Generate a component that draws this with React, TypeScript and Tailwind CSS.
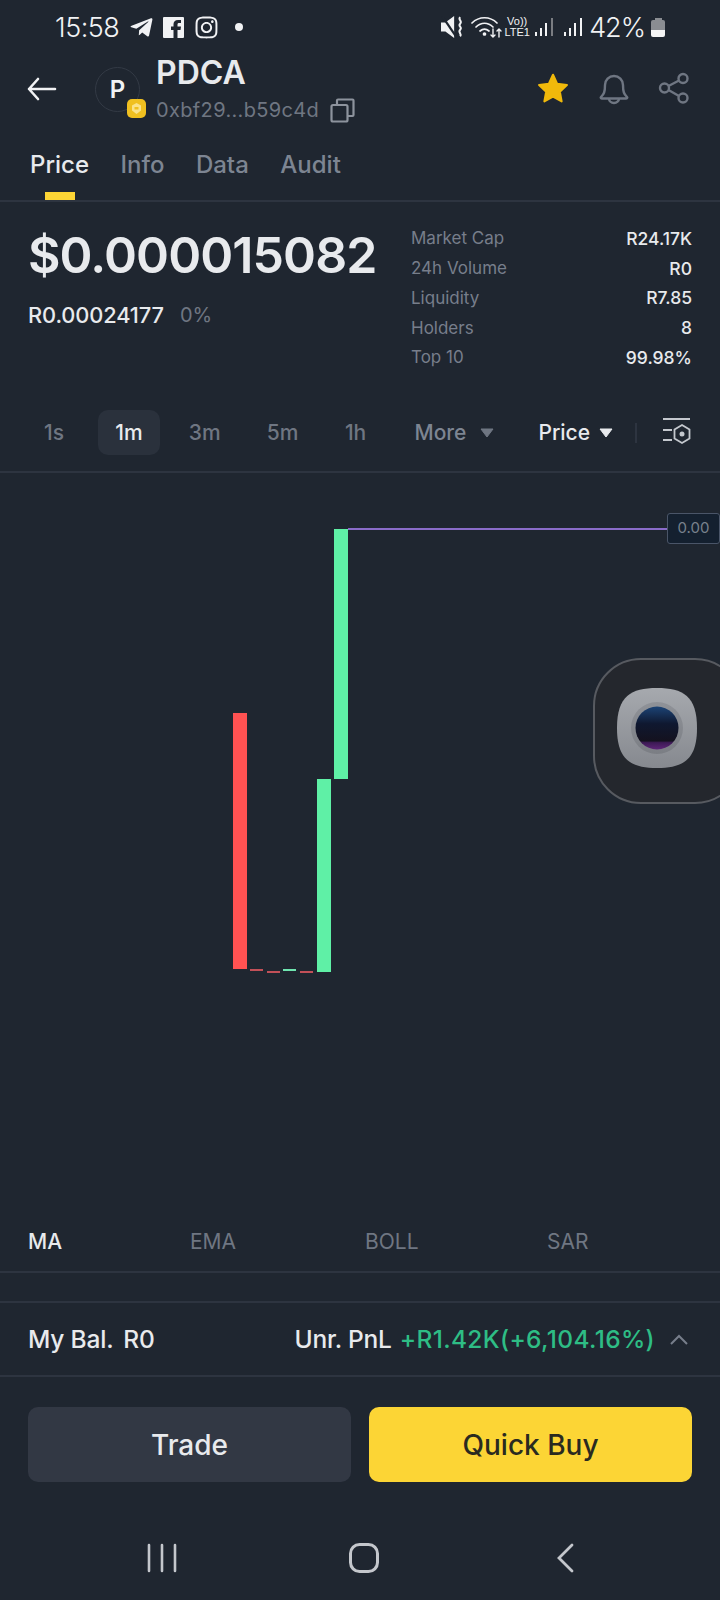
import React from "react";
import { FaTelegramPlane, FaInstagram } from "react-icons/fa";

const font = { fontFamily: "Inter, 'Liberation Sans', sans-serif" };

function StatusIcons() {
  return (
    <div className="flex items-center">
      {/* muted / vibrate */}
      <svg width="23" height="22" viewBox="0 0 21 20" fill="none">
        <path d="M0 6h4l8-6v20l-8-6H0z" fill="#f1f2f4" />
        <path d="M1 0l13 19" stroke="#1f2630" strokeWidth="2" />
        <path d="M17.500 1c-2.500 2.500 2.500 3.500 0 6s2.500 3 0 5.500 2 3.500 0 6" stroke="#f1f2f4" strokeWidth="1.800" />
      </svg>
      <svg width="32" height="24" viewBox="0 0 32 24" className="ml-[7px]" fill="none" stroke="#f1f2f4" strokeWidth="1.700" strokeLinecap="round">
        <path d="M1 8c7-7 18-7 25 0" />
        <path d="M5 12c5-5 12-5 17 0" />
        <path d="M9 16c3-2.500 6-2.500 9 0" />
        <circle cx="13.500" cy="19" r="1" fill="#f1f2f4" />
        <path d="M22 14v8m-2-2l2 2 2-2M28 22v-8m-2 2l2-2 2 2" strokeWidth="1.400" />
      </svg>
      <div className="flex flex-col items-center text-[#f1f2f4] text-[11px] leading-[11px] ml-[1px] font-medium w-[26px]" style={{ fontFamily: "'Liberation Sans', sans-serif" }}>
        <span>Vo))</span>
        <span>LTE1</span>
      </div>
      <Signal dim />
      <div className="w-[5px]" />
      <Signal />
      <span className="ml-[6px] text-[27px] leading-none font-light text-[#f1f2f4] tracking-[-1px]">42%</span>
      <div className="ml-[6px] flex flex-col items-center">
        <div className="w-[7px] h-[2px] bg-[#8a8d92]" />
        <div className="w-[14px] h-[17px] rounded-[2px] overflow-hidden flex flex-col">
          <div className="h-[10px] bg-[#8a8d92]" />
          <div className="h-[7px] bg-[#f4f4f4]" />
        </div>
      </div>
    </div>
  );
}

function Signal({ dim }: { dim?: boolean }) {
  return (
    <svg width="20" height="20" viewBox="0 0 20 20" className="ml-[4px]" fill="#f1f2f4">
      <rect x="1" y="15" width="2" height="4" />
      <rect x="6" y="11" width="2" height="8" />
      <rect x="11" y="6" width="2" height="13" />
      <rect x="17" y="1" width="2" height="18" fill={dim ? "#7a7d82" : "#f1f2f4"} />
    </svg>
  );
}

function Stat({ label, value }: { label: string; value: string }) {
  return (
    <div className="flex items-center justify-between h-[29.8px]">
      <span className="text-[17px] text-[#777e8b]">{label}</span>
      <span className="text-[17.500px] font-medium text-[#e8eaed]">{value}</span>
    </div>
  );
}

function Caret({ color }: { color: string }) {
  return (
    <svg width="14" height="10" viewBox="0 0 14 10">
      <path d="M1 1h12L7 9z" fill={color} stroke={color} strokeLinejoin="round" />
    </svg>
  );
}

export default function App() {
  return (
    <div className="relative w-[720px] h-[1600px] overflow-hidden bg-[#1f2630] flex flex-col" style={font}>
      {/* status bar */}
      <div className="h-[54px] flex items-center justify-between pl-[55px] pr-[55px] shrink-0">
        <div className="flex items-center">
          <span className="text-[27px] leading-none font-light text-[#f1f2f4] tracking-[-0.5px]">15:58</span>
          <FaTelegramPlane className="ml-[10px] text-[#f1f2f4]" size={25} />
          <svg width="21" height="21" viewBox="0 0 21 21" className="ml-[9px]">
            <path d="M0 1a1 1 0 0 1 1-1h19a1 1 0 0 1 1 1v19a1 1 0 0 1-1 1h-5.500v-8h3l.5-3.500h-3.500V7.500c0-1 .5-1.500 1.500-1.500h2V3h-3c-3 0-4.500 1.800-4.500 4.300v2.200H8V13h2.500v8H1a1 1 0 0 1-1-1z" fill="#f1f2f4" />
          </svg>
          <FaInstagram className="ml-[10px] text-[#f1f2f4]" size={25} />
          <div className="ml-[16px] w-[8px] h-[8px] rounded-full bg-[#f1f2f4]" />
        </div>
        <StatusIcons />
      </div>

      {/* token header */}
      <div className="h-[71px] flex items-center pl-[27px] pr-[30px] shrink-0">
        <svg width="30" height="24" viewBox="0 0 30 24" className="-mt-[2px]" fill="none" stroke="#f1f2f4" strokeWidth="2.600" strokeLinecap="round" strokeLinejoin="round">
          <path d="M28 12H2M11 2L2 12l9 10" />
        </svg>
        <div className="relative ml-[38px] w-[45px] h-[45px] rounded-full border border-[#333a45] flex items-center justify-center">
          <span className="text-[24px] font-semibold text-[#f1f2f4]">P</span>
          <div className="absolute left-[31px] top-[31px] w-[19px] h-[19px] rounded-[5px] bg-[#f0c020] flex items-center justify-center">
            <svg width="13" height="13" viewBox="0 0 13 13" fill="#fbe38a">
              <path d="M6.500 1L11 3.500v5L6.500 12 2 8.500v-5z" />
              <path d="M4.500 5h4v2.500h-4z" fill="#f0c020" />
            </svg>
          </div>
        </div>
        <div className="ml-[16px] flex flex-col mt-[6px]">
          <span className="text-[32px] leading-[34px] font-semibold text-[#e8eaed] -mt-[5px]">PDCA</span>
          <div className="flex items-center mt-[6px]">
            <span className="text-[20px] leading-[28px] text-[#6f7682] tracking-[0.35px]">0xbf29...b59c4d</span>
            <svg width="25" height="25" viewBox="0 0 25 25" className="ml-[11px] mt-[1px]" fill="none" stroke="#8d939d" strokeWidth="2.200">
              <rect x="1.500" y="7" width="16" height="16.500" rx="1.500" />
              <path d="M7 7V2.500a1 1 0 0 1 1-1h14.500a1 1 0 0 1 1 1V17a1 1 0 0 1-1 1h-5" />
            </svg>
          </div>
        </div>
        <div className="ml-auto flex items-center -mt-[4px]">
          <svg width="34" height="32" viewBox="0 0 24 23" fill="#f0b90b" stroke="#f0b90b" strokeWidth="1.500" strokeLinejoin="round">
            <path d="M12 2l3 6.500 7 .9-5.100 4.800 1.300 6.900L12 17.700 5.800 21.100l1.300-6.900L2 9.400l7-.9z" />
          </svg>
          <svg width="32" height="34" viewBox="0 0 32 34" className="ml-[28px]" fill="none" stroke="#6f7682" strokeWidth="2.400" strokeLinejoin="round">
            <path d="M3 26c3-3 4-5 4-12a9 9 0 0 1 18 0c0 7 1 9 4 12 .7.900 0 1.500-1 1.500H4c-1 0-1.700-.6-1-1.500z" />
            <path d="M11 27.500a5 4.500 0 0 0 10 0" />
          </svg>
          <svg width="32" height="32" viewBox="0 0 32 32" className="ml-[28px]" fill="none" stroke="#6f7682" strokeWidth="2.400">
            <circle cx="6.500" cy="16" r="4.500" />
            <circle cx="25" cy="6.500" r="4.500" />
            <circle cx="25" cy="26" r="4.500" />
            <path d="M10.500 14l10.500-5.500M10.500 18l10.500 6" />
          </svg>
        </div>
      </div>

      {/* tabs */}
      <div className="h-[77px] shrink-0 flex items-start pl-[30px] gap-[31.500px] border-b-2 border-[#2d3440] pt-[22px]">
        <div className="relative h-[53px]">
          <span className="text-[24px] leading-[36px] font-medium text-[#e8eaed]">Price</span>
          <div className="absolute left-[15px] top-[45px] w-[30px] h-[8px] bg-[#fcd535]" />
        </div>
        <span className="text-[24px] leading-[36px] font-medium text-[#7d8592]">Info</span>
        <span className="text-[24px] leading-[36px] font-medium text-[#7d8592]">Data</span>
        <span className="text-[24px] leading-[36px] font-medium text-[#7d8592]">Audit</span>
      </div>

      {/* price + stats */}
      <div className="h-[208px] shrink-0 flex pl-[28px] pr-[28px]">
        <div className="w-[383px] shrink-0 pt-[24px]">
          <div className="text-[50px] leading-[58px] font-semibold text-[#e8eaed] tracking-[-0.9px]">$0.000015082</div>
          <div className="mt-[17px] flex items-center">
            <span className="text-[21.800px] leading-[28px] font-medium text-[#e8eaed] tracking-[-0.1px]">R0.00024177</span>
            <span className="ml-[16px] text-[20px] leading-[28px] text-[#6f7682]">0%</span>
          </div>
        </div>
        <div className="flex-1 pt-[22px]">
          <Stat label="Market Cap" value="R24.17K" />
          <Stat label="24h Volume" value="R0" />
          <Stat label="Liquidity" value="R7.85" />
          <Stat label="Holders" value="8" />
          <Stat label="Top 10" value="99.98%" />
        </div>
      </div>

      {/* interval row */}
      <div className="h-[63px] shrink-0 flex items-start border-b-2 border-[#2d3440] pl-[28px] pr-[28px]">
        <div className="h-[45px] w-[70px] flex items-center pl-[16px] text-[21px] font-medium text-[#6f7682]">1s</div>
        <div className="h-[45px] w-[62px] rounded-[10px] bg-[#2a313c] flex items-center justify-center text-[21px] font-medium text-[#e8eaed]">1m</div>
        <div className="h-[45px] w-[90px] flex items-center justify-center text-[21px] font-medium text-[#6f7682]">3m</div>
        <div className="h-[45px] w-[66px] flex items-center justify-center text-[21px] font-medium text-[#6f7682]">5m</div>
        <div className="h-[45px] w-[80px] flex items-center justify-center text-[21px] font-medium text-[#6f7682]">1h</div>
        <div className="h-[45px] ml-[19px] flex items-center text-[21px] font-medium text-[#7d8592]">
          More
          <span className="ml-[14px]"><Caret color="#6f7682" /></span>
        </div>
        <div className="h-[45px] ml-[44px] flex items-center text-[21px] font-medium text-[#e8eaed]">
          Price
          <span className="ml-[9px]"><Caret color="#e8eaed" /></span>
        </div>
        <div className="ml-[22px] mt-[13px] w-[2px] h-[20px] bg-[#2d3440]" />
        <svg width="30" height="32" viewBox="0 0 30 32" className="ml-[25px] mt-[6px] shrink-0" fill="none" stroke="#c4c8ce" strokeWidth="1.800">
          <path d="M1 3h27M1 14h9M1 24h9" />
          <path d="M20 9l7.500 4.500v9L20 27l-7.500-4.500v-9z" />
          <circle cx="20" cy="18" r="2.500" fill="#c4c8ce" stroke="none" />
        </svg>
      </div>

      {/* chart canvas */}
      <div className="relative h-[739px] shrink-0">
        <div className="absolute left-[233px] top-[240px] w-[14px] h-[256px] bg-[#ff5252]" />
        <div className="absolute left-[250px] top-[496px] w-[13px] h-[2px] bg-[#c25058]" />
        <div className="absolute left-[267px] top-[498px] w-[13px] h-[2px] bg-[#c25058]" />
        <div className="absolute left-[283px] top-[496px] w-[13px] h-[2px] bg-[#6fe5b0]" />
        <div className="absolute left-[300px] top-[498px] w-[13px] h-[2px] bg-[#c25058]" />
        <div className="absolute left-[317px] top-[306px] w-[14px] h-[193px] bg-[#5ff0a6]" />
        <div className="absolute left-[334px] top-[56px] w-[14px] h-[250px] bg-[#5ff0a6]" />
        <div className="absolute left-[348px] top-[55px] w-[320px] h-[2px] bg-[#8a6cc9]" />
        <div className="absolute left-[667px] top-[40px] w-[53px] h-[31px] rounded-[3px] border border-[#4a5568] bg-[#14202f] flex items-center justify-center text-[15px] text-[#78808c]">
          0.00
        </div>
      </div>

      {/* indicators */}
      <div className="h-[61px] shrink-0 flex items-center border-b-2 border-[#2d3440] pl-[28px] text-[21px]">
        <span className="w-[162px] font-medium text-[#e8eaed]">MA</span>
        <span className="w-[175px] text-[#6f7682]">EMA</span>
        <span className="w-[182px] text-[#6f7682]">BOLL</span>
        <span className="text-[#6f7682]">SAR</span>
      </div>
      <div className="h-[30px] shrink-0 border-b-2 border-[#2d3440]" />

      {/* balance */}
      <div className="h-[74px] shrink-0 flex items-center border-b-2 border-[#2d3440] pl-[28px] pr-[32px] text-[24.500px] font-medium tracking-[-0.2px]">
        <span className="text-[#e8eaed]">My Bal.</span>
        <span className="ml-[10px] text-[#e8eaed]">R0</span>
        <span className="ml-auto text-[#e8eaed]">Unr. PnL</span>
        <span className="ml-[8px] text-[#2ebd85] tracking-[0.35px]">+R1.42K(+6,104.16%)</span>
        <svg width="18" height="11" viewBox="0 0 18 11" className="ml-[15px]" fill="none" stroke="#777e8b" strokeWidth="2">
          <path d="M1 10l8-8 8 8" />
        </svg>
      </div>

      {/* actions */}
      <div className="shrink-0 flex gap-[18px] px-[28px] pt-[30px]">
        <div className="flex-1 h-[75px] rounded-[10px] bg-[#323844] flex items-center justify-center text-[28px] font-medium text-[#e8eaed]">Trade</div>
        <div className="flex-1 h-[75px] rounded-[10px] bg-[#fcd535] flex items-center justify-center text-[28px] font-medium text-[#2a2a20]">Quick Buy</div>
      </div>

      {/* android nav */}
      <div className="flex-1 flex items-start pt-[61px] pl-[147px]">
        <svg width="30" height="30" viewBox="0 0 30 30" fill="none" stroke="#c4c7cc" strokeWidth="2.600" strokeLinecap="round">
          <path d="M2 2v26M15 2v26M28 2v26" />
        </svg>
        <svg width="30" height="30" viewBox="0 0 30 30" className="ml-[172px]" fill="none" stroke="#c4c7cc" strokeWidth="3">
          <rect x="1.500" y="1.500" width="27" height="27" rx="9" />
        </svg>
        <svg width="20" height="30" viewBox="0 0 20 30" className="ml-[177px]" fill="none" stroke="#c4c7cc" strokeWidth="2.800" strokeLinecap="round">
          <path d="M16 2L3 15l13 13" />
        </svg>
      </div>

      {/* floating camera bubble */}
      <div className="absolute left-[593px] top-[658px] w-[150px] h-[146px] rounded-[48px] border-2 border-[#575a60] bg-[#24272d] flex items-start pl-[21px] pt-[27px]">
        <svg width="82" height="82" viewBox="0 0 82 82">
          <defs>
            <linearGradient id="body" x1="0" y1="0" x2="0" y2="1">
              <stop offset="0" stopColor="#a6a9ae" />
              <stop offset="1" stopColor="#86898f" />
            </linearGradient>
            <linearGradient id="ring" x1="0" y1="0" x2="0" y2="1">
              <stop offset="0" stopColor="#8f9298" />
              <stop offset="1" stopColor="#7b7e84" />
            </linearGradient>
            <linearGradient id="lens" x1="0" y1="0" x2="0" y2="1">
              <stop offset="0" stopColor="#1c4476" />
              <stop offset="0.4" stopColor="#0f1830" />
              <stop offset="0.8" stopColor="#14121f" />
              <stop offset="0.84" stopColor="#3d1a55" />
              <stop offset="1" stopColor="#5e2678" />
            </linearGradient>
          </defs>
          <path d="M41 1c26 0 40 8 40 40s-14 40-40 40S1 73 1 41 15 1 41 1z" fill="url(#body)" />
          <circle cx="41" cy="41" r="26" fill="url(#ring)" />
          <circle cx="41" cy="41" r="21.500" fill="url(#lens)" />
        </svg>
      </div>
    </div>
  );
}
